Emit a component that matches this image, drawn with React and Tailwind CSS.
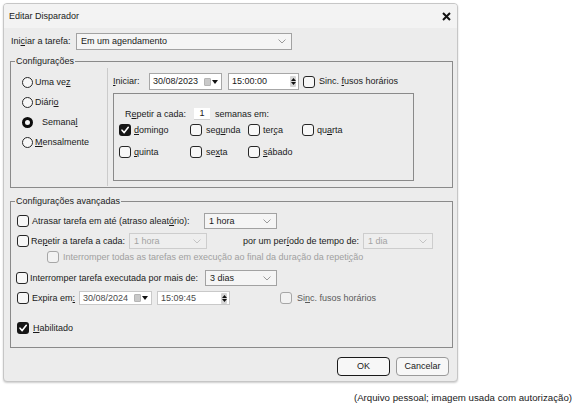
import React from "react";

const U = ({ children }) => (
  <span className="underline decoration-1 underline-offset-[1px]">{children}</span>
);

const Check = ({ checked, disabled }) => (
  <span
    className={
      checked
        ? "w-[12px] h-[12px] shrink-0 rounded-[3px] bg-[#161616] flex items-center justify-center"
        : disabled
        ? "block w-[12px] h-[12px] shrink-0 rounded-[3px] border border-[#a6a6a6] bg-[#f2f2f2]"
        : "block w-[12px] h-[12px] shrink-0 rounded-[3px] border-[1.5px] border-[#262626] bg-[#f7f7f7]"
    }
  >
    {checked && (
      <svg width="10" height="10" viewBox="0 0 10 10">
        <path d="M2 5.2 L4.2 7.6 L8.3 2.3" fill="none" stroke="#fff" strokeWidth="1.6" strokeLinecap="round" strokeLinejoin="round" />
      </svg>
    )}
  </span>
);

const Radio = ({ selected }) => (
  <span
    className={
      selected
        ? "block w-[11px] h-[11px] shrink-0 rounded-full border-[3px] border-[#0d0d0d] bg-[#f7f7f7]"
        : "block w-[11px] h-[11px] shrink-0 rounded-full border-[1.5px] border-[#262626] bg-[#f7f7f7]"
    }
  />
);

const Chevron = ({ color = "#9a9a9a" }) => (
  <svg width="8" height="5" viewBox="0 0 8 5" className="shrink-0">
    <polyline points="0.5,0.5 4,4 7.5,0.5" fill="none" stroke={color} strokeWidth="1" />
  </svg>
);

const Select = ({ text, w, disabled, h = "h-[16px]" }) => (
  <div
    className={
      disabled
        ? `${w} ${h} shrink-0 border border-[#cdcdcd] bg-[#eeeeee] flex items-center justify-between pl-[4px] pr-[5px] text-[#a3a3a3]`
        : `${w} ${h} shrink-0 border border-[#a2a2a2] bg-[#f5f5f5] flex items-center justify-between pl-[4px] pr-[5px]`
    }
  >
    <span>{text}</span>
    <Chevron color={disabled ? "#c4c4c4" : "#9a9a9a"} />
  </div>
);

const DateBox = ({ text, w, h, dim }) => (
  <div
    className={
      dim
        ? `${w} ${h} shrink-0 border border-[#c9c9c9] bg-white flex items-center justify-between pl-[3px] pr-[3px] text-[#4a4a4a]`
        : `${w} ${h} shrink-0 border border-[#a7a7a7] bg-white flex items-center justify-between pl-[3px] pr-[3px]`
    }
  >
    <span>{text}</span>
    <span className="flex items-center gap-[1px]">
      <span className="block w-[7px] h-[8px] rounded-[1px] bg-[#c9c9c9] border border-[#b5b5b5]" />
      <svg width="6" height="4" viewBox="0 0 6 4">
        <polygon points="0,0 6,0 3,4" fill="#111" />
      </svg>
    </span>
  </div>
);

const TimeBox = ({ text, w, h, dim }) => (
  <div
    className={
      dim
        ? `${w} ${h} shrink-0 border border-[#c9c9c9] bg-white flex items-center justify-between pl-[3px] pr-[2px] text-[#4a4a4a]`
        : `${w} ${h} shrink-0 border border-[#a7a7a7] bg-white flex items-center justify-between pl-[3px] pr-[2px]`
    }
  >
    <span>{text}</span>
    <span className="w-[6px] h-[11px] bg-[#d6d6d6] rounded-[1px] flex flex-col items-center justify-center gap-[1px]">
      <svg width="5" height="3" viewBox="0 0 5 3">
        <polygon points="0,3 5,3 2.5,0" fill="#111" />
      </svg>
      <svg width="5" height="3" viewBox="0 0 5 3">
        <polygon points="0,0 5,0 2.5,3" fill="#111" />
      </svg>
    </span>
  </div>
);

export default function App() {
  return (
    <div
      className="w-[576px] h-[406px] bg-white overflow-hidden text-[9px] leading-[11px] text-[#1a1a1a]"
      style={{ fontFamily: "'Liberation Sans', Arial, sans-serif" }}
    >
      <div className="ml-[3px] mt-[3px] w-[455px] h-[379px] border border-[#c6c6c6] rounded-[4px] bg-[#ececec] shadow-[0_1px_2px_rgba(0,0,0,0.2)] flex flex-col overflow-hidden">
        {/* title bar */}
        <div className="h-[24px] shrink-0 bg-[#f3f3f3] flex items-center justify-between pl-[5px] pr-[6px]">
          <span>Editar Disparador</span>
          <svg width="9" height="9" viewBox="0 0 9 9">
            <path d="M1 1 L8 8 M8 1 L1 8" stroke="#111" strokeWidth="2" />
          </svg>
        </div>

        {/* Iniciar a tarefa */}
        <div className="mt-[5px] h-[17px] flex items-center pl-[7px]">
          <span className="w-[65px]">
            Ini<U>c</U>iar a tarefa:
          </span>
          <Select text="Em um agendamento" w="w-[216px]" h="h-[17px]" />
        </div>

        {/* Configurações */}
        <div className="relative mt-[11px] ml-[6px] w-[443px] h-[127px] shrink-0 border border-[#8a8a8a] flex">
          <span className="absolute -top-[6px] left-[4px] bg-[#ececec] px-[1px]">Configurações</span>

          <div className="mt-[6px] w-[97px] h-[118px] border-r border-[#cbcbcb] pt-[4px] flex flex-col">
            <div className="h-[20px] flex items-center pl-[11px]">
              <Radio />
              <span className="ml-[2px]">
                Uma ve<U>z</U>
              </span>
            </div>
            <div className="h-[20px] flex items-center pl-[11px]">
              <Radio />
              <span className="ml-[2px]">
                Diári<U>o</U>
              </span>
            </div>
            <div className="h-[20px] flex items-center pl-[11px]">
              <Radio selected />
              <span className="ml-[9px]">
                Semana<U>l</U>
              </span>
            </div>
            <div className="h-[20px] flex items-center pl-[11px]">
              <Radio />
              <span className="ml-[2px]">
                <U>M</U>ensalmente
              </span>
            </div>
          </div>

          <div className="flex flex-col pl-[5px]">
            <div className="mt-[11px] h-[17px] flex items-center">
              <span className="w-[36px]">
                <U>I</U>niciar:
              </span>
              <DateBox text="30/08/2023" w="w-[73px]" h="h-[17px]" />
              <div className="ml-[6px]">
                <TimeBox text="15:00:00" w="w-[71px]" h="h-[17px]" />
              </div>
              <div className="ml-[4px]">
                <Check />
              </div>
              <span className="ml-[4px]">
                Sinc. <U>f</U>usos horários
              </span>
            </div>

            <div className="mt-[3px] w-[301px] h-[88px] border border-[#8a8a8a] flex flex-col">
              <div className="mt-[14px] h-[12px] flex items-center pl-[11px]">
                <span className="w-[69px]">
                  R<U>e</U>petir a cada:
                </span>
                <span className="w-[16px] h-[12px] bg-white border-b border-[#cfcfcf] flex items-center justify-center">1</span>
                <span className="ml-[5px]">semanas em:</span>
              </div>
              <div className="mt-[4px] h-[12px] flex items-center pl-[5px]">
                <div className="w-[71px] flex items-center">
                  <Check checked />
                  <span className="ml-[3px]">
                    <U>d</U>omingo
                  </span>
                </div>
                <div className="w-[58px] flex items-center">
                  <Check />
                  <span className="ml-[4px]">
                    seg<U>u</U>nda
                  </span>
                </div>
                <div className="w-[54px] flex items-center">
                  <Check />
                  <span className="ml-[3px]">
                    ter<U>ç</U>a
                  </span>
                </div>
                <div className="flex items-center">
                  <Check />
                  <span className="ml-[3px]">
                    qu<U>a</U>rta
                  </span>
                </div>
              </div>
              <div className="mt-[10px] h-[12px] flex items-center pl-[5px]">
                <div className="w-[71px] flex items-center">
                  <Check />
                  <span className="ml-[3px]">
                    <U>q</U>uinta
                  </span>
                </div>
                <div className="w-[58px] flex items-center">
                  <Check />
                  <span className="ml-[4px]">
                    se<U>x</U>ta
                  </span>
                </div>
                <div className="flex items-center">
                  <Check />
                  <span className="ml-[3px]">
                    <U>s</U>ábado
                  </span>
                </div>
              </div>
            </div>
          </div>
        </div>

        {/* Configurações avançadas */}
        <div className="relative mt-[13px] ml-[6px] w-[443px] h-[147px] shrink-0 border border-[#8a8a8a] flex flex-col">
          <span className="absolute -top-[6px] left-[4px] bg-[#ececec] px-[1px]">Configurações avançadas</span>

          <div className="mt-[11px] h-[16px] flex items-center pl-[6px]">
            <div className="w-[187px] flex items-center">
              <Check />
              <span className="ml-[3px]">
                Atrasar tarefa em até (atraso aleat<U>ó</U>rio):
              </span>
            </div>
            <Select text="1 hora" w="w-[73px]" />
          </div>

          <div className="mt-[4px] h-[16px] flex items-center pl-[6px]">
            <div className="w-[112px] flex items-center">
              <Check />
              <span className="ml-[2px]">
                Re<U>p</U>etir a tarefa a cada:
              </span>
            </div>
            <Select text="1 hora" w="w-[78px]" disabled />
            <span className="ml-[36px] w-[120px]">
              por um per<U>í</U>odo de tempo de:
            </span>
            <Select text="1 dia" w="w-[70px]" disabled />
          </div>

          <div className="mt-[2px] h-[12px] flex items-center pl-[36px] text-[#a0a0a0]">
            <Check disabled />
            <span className="ml-[4px]">
              Interromper todas as tarefas em execução ao final da duração da repeti<U>ç</U>ão
            </span>
          </div>

          <div className="mt-[7px] h-[16px] flex items-center pl-[5px]">
            <div className="w-[189px] flex items-center">
              <Check />
              <span className="ml-[2px]">Interromper tarefa executada por mais de:</span>
            </div>
            <Select text="3 dias" w="w-[72px]" />
          </div>

          <div className="mt-[5px] h-[14px] flex items-center pl-[6px]">
            <div className="w-[62px] flex items-center">
              <Check />
              <span className="ml-[3px]">
                Expira em<U>:</U>
              </span>
            </div>
            <DateBox text="30/08/2024" w="w-[73px]" h="h-[14px]" dim />
            <div className="ml-[5px]">
              <TimeBox text="15:09:45" w="w-[73px]" h="h-[14px]" dim />
            </div>
            <div className="ml-[50px]">
              <Check disabled />
            </div>
            <span className="ml-[5px] text-[#5a5a5a]">
              Si<U>n</U>c. fusos horários
            </span>
          </div>

          <div className="mt-[17px] h-[12px] flex items-center pl-[6px]">
            <Check checked />
            <span className="ml-[4px]">
              <U>H</U>abilitado
            </span>
          </div>
        </div>

        {/* buttons */}
        <div className="mt-[9px] flex justify-end gap-[6px] pr-[8px]">
          <button className="w-[53px] h-[19px] rounded-[4px] border-[1.5px] border-[#1a1a1a] bg-[#f7f7f7] text-[9px]">OK</button>
          <button className="w-[53px] h-[19px] rounded-[4px] border border-[#9a9a9a] bg-[#f7f7f7] text-[9px]">Cancelar</button>
        </div>
      </div>

      <div className="mt-[10px] pr-[4px] text-right text-[9.7px] leading-[11px] text-[#1a1a1a]">
        (Arquivo pessoal; imagem usada com autorização)
      </div>
    </div>
  );
}
